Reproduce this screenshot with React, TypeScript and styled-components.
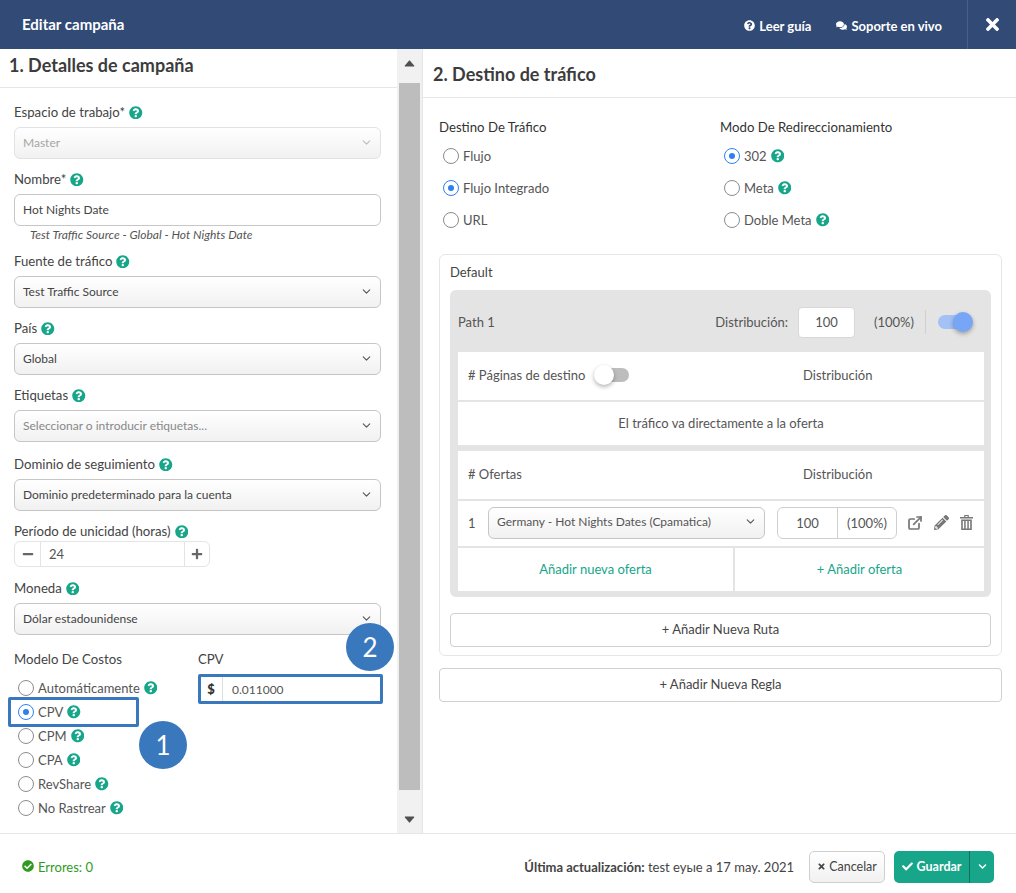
import styled, { createGlobalStyle } from "styled-components";
import {
  FaCheck,
  FaCheckCircle,
  FaChevronDown,
  FaComments,
  FaMinus,
  FaPencilAlt,
  FaPlus,
  FaQuestionCircle,
  FaTimes,
} from "react-icons/fa";
import { FiChevronDown, FiExternalLink } from "react-icons/fi";
import { IoCaretDown, IoCaretUp } from "react-icons/io5";

const GlobalStyle = createGlobalStyle`
  * { box-sizing: border-box; }
  html, body { margin: 0; padding: 0; }
  body {
    font-family: "Lato", "Liberation Sans", sans-serif;
    color: #444;
    background: #fff;
  }
`;

const Page = styled.div`
  width: 1016px;
  height: 893px;
  display: flex;
  flex-direction: column;
  overflow: hidden;
`;

const Header = styled.header`
  height: 49px;
  flex: none;
  background: #324a76;
  color: #fff;
  display: flex;
  align-items: center;
  padding-left: 22px;
`;

const HeaderTitle = styled.div`
  font-size: 15px;
  font-weight: 700;
  flex: 1;
  margin-top: -1px;
`;

const HeaderLink = styled.div`
  display: flex;
  align-items: center;
  gap: 4px;
  font-size: 13px;
  font-weight: 700;
  margin-right: 25px;
  margin-top: 2px;
  svg { font-size: 11px; }
`;

const HeaderClose = styled.div`
  width: 49px;
  height: 49px;
  border-left: 1px solid #47608c;
  display: flex;
  align-items: center;
  justify-content: center;
  font-size: 19px;
`;

const Main = styled.div`
  flex: 1;
  display: flex;
  min-height: 0;
`;

const LeftPanel = styled.section`
  width: 397px;
  position: relative;
`;

const LeftHeading = styled.h2`
  margin: 0;
  height: 39px;
  padding: 6px 0 0 9px;
  border-bottom: 1px solid #e6e6e6;
  font-size: 18px;
  line-height: 21px;
  font-weight: 700;
  color: #3c3c3c;
`;

const RightHeading = styled.h2`
  margin: 0;
  height: 49px;
  padding: 15px 0 0 10px;
  border-bottom: 1px solid #e6e6e6;
  font-size: 18px;
  line-height: 21px;
  font-weight: 700;
  color: #3c3c3c;
`;

const Form = styled.div`
  padding: 17px 16px 0 14px;
`;

const Field = styled.div<{ $gap?: number }>`
  margin-bottom: ${(p) => p.$gap ?? 13}px;
`;

const Label = styled.div<{ $gap?: number }>`
  display: flex;
  align-items: center;
  gap: 4px;
  font-size: 13.2px;
  line-height: 15px;
  color: #444;
  margin-bottom: ${(p) => p.$gap ?? 7}px;
`;

const Help = styled(FaQuestionCircle)`
  color: #17a689;
  font-size: 13.5px;
  flex: none;
`;

const SelectBox = styled.div<{ $disabled?: boolean; $muted?: boolean }>`
  height: 32px;
  border: 1px solid ${(p) => (p.$disabled ? "#e2e2e2" : "#c6c6c6")};
  border-radius: 6px;
  background: linear-gradient(#fff, #f1f1f1);
  display: flex;
  align-items: center;
  justify-content: space-between;
  padding: 0 7px 2px 8px;
  font-size: 12px;
  color: ${(p) => (p.$disabled ? "#a5a5a5" : p.$muted ? "#888" : "#444")};
  svg {
    font-size: 13px;
    color: ${(p) => (p.$disabled ? "#bbb" : "#555")};
  }
`;

const TextInput = styled.div`
  height: 32px;
  border: 1px solid #c6c6c6;
  border-radius: 6px;
  background: #fff;
  display: flex;
  align-items: center;
  padding: 0 8px 2px;
  font-size: 12px;
  color: #444;
`;

const Caption = styled.div`
  height: 14px;
  padding: 2px 0 0 16px;
  margin-bottom: 14px;
  font-size: 12px;
  line-height: 14px;
  font-style: italic;
  color: #555;
`;

const Stepper = styled.div`
  width: 196px;
  height: 26px;
  border: 1px solid #e4e4e4;
  border-radius: 6px;
  display: grid;
  grid-template-columns: 25px 1fr 24px;
  font-size: 13px;
  color: #555;
`;

const StepButton = styled.div`
  display: flex;
  align-items: center;
  justify-content: center;
  font-size: 12px;
  color: #666;
`;

const StepValue = styled.div`
  border-left: 1px solid #e4e4e4;
  border-right: 1px solid #e4e4e4;
  display: flex;
  align-items: center;
  padding-left: 8px;
`;

const CostGrid = styled.div`
  display: grid;
  grid-template-columns: 184px 1fr;
  margin-top: 17px;
`;

const CostLabel = styled.div`
  font-size: 13.2px;
  line-height: 15px;
  color: #444;
  margin-bottom: 9px;
`;

const CostRadios = styled.div`
  display: flex;
  flex-direction: column;
  padding-left: 4px;
`;

const RadioRow = styled.div<{ $height: number }>`
  display: flex;
  align-items: center;
  gap: 4px;
  height: ${(p) => p.$height}px;
  font-size: 13px;
  color: #555;
`;

const RadioDot = styled.span<{ $on?: boolean }>`
  width: 16px;
  height: 16px;
  border-radius: 50%;
  flex: none;
  border: 1.5px solid ${(p) => (p.$on ? "#2f7fef" : "#8c8c8c")};
  background: #fff;
  display: flex;
  align-items: center;
  justify-content: center;
  &::after {
    content: "";
    width: 6px;
    height: 6px;
    border-radius: 50%;
    background: ${(p) => (p.$on ? "#2f7fef" : "transparent")};
  }
`;

const CurrencyInput = styled.div`
  margin: 2px 0 0 2px;
  height: 26px;
  width: 181px;
  display: flex;
  align-items: center;
  font-size: 12px;
  color: #555;
`;

const Addon = styled.div`
  width: 23px;
  height: 100%;
  border-right: 1px solid #dedede;
  display: flex;
  align-items: center;
  justify-content: center;
  font-size: 13px;
  font-weight: 900;
  color: #333;
`;

const AddonValue = styled.div`
  padding-left: 9px;
`;

const Highlight = styled.div<{ $x: number; $y: number; $w: number; $h: number }>`
  position: absolute;
  left: ${(p) => p.$x}px;
  top: ${(p) => p.$y}px;
  width: ${(p) => p.$w}px;
  height: ${(p) => p.$h}px;
  border: 3px solid #3978bc;
  border-radius: 2px;
`;

const Marker = styled.div<{ $x: number; $y: number }>`
  position: absolute;
  left: ${(p) => p.$x}px;
  top: ${(p) => p.$y}px;
  width: 48px;
  height: 48px;
  border-radius: 50%;
  background: #3978bc;
  color: #fff;
  font-size: 26px;
  display: flex;
  align-items: center;
  justify-content: center;
`;

const Scrollbar = styled.div`
  width: 26px;
  flex: none;
  background: #f1f1f1;
  border-right: 1px solid #e6e6e6;
  display: flex;
  flex-direction: column;
  align-items: center;
  color: #505050;
`;

const ScrollArrow = styled.div<{ $height: number; $top: number; $bottom: number }>`
  height: ${(p) => p.$height}px;
  padding: ${(p) => p.$top}px 0 ${(p) => p.$bottom}px;
  flex: none;
  display: flex;
  align-items: center;
  justify-content: center;
  font-size: 15px;
`;

const ScrollThumb = styled.div`
  flex: 1;
  width: 21px;
  margin-right: 1px;
  background: #bdbdbd;
`;

const RightPanel = styled.section`
  flex: 1;
  min-width: 0;
`;

const RightBody = styled.div`
  padding: 22px 14px 0 16px;
`;

const DestGrid = styled.div`
  display: grid;
  grid-template-columns: 281px 1fr;
  margin-bottom: 18px;
`;

const DestLabel = styled.div`
  font-size: 13.2px;
  line-height: 15px;
  color: #333;
  margin-bottom: 5px;
`;

const DestRadios = styled.div`
  display: flex;
  flex-direction: column;
  padding-left: 4px;
`;

const RuleCard = styled.div`
  border: 1px solid #e6e6e6;
  border-radius: 6px;
  padding: 9px 10px 8px;
`;

const RuleTitle = styled.div`
  font-size: 13px;
  line-height: 16px;
  color: #444;
  margin-bottom: 10px;
`;

const PathBox = styled.div`
  background: #e4e4e4;
  border-radius: 6px;
  padding: 0 7px 6px 8px;
  font-size: 13px;
  color: #555;
`;

const PathHeader = styled.div`
  height: 62px;
  display: flex;
  align-items: center;
  padding: 2px 13px 0 0;
`;

const PathName = styled.div`
  flex: 1;
`;

const PathInput = styled.div`
  width: 57px;
  height: 31px;
  margin: 0 19px 0 10px;
  background: #fff;
  border: 1px solid #d8d8d8;
  border-radius: 4px;
  display: flex;
  align-items: center;
  justify-content: center;
`;

const PathDivider = styled.div`
  width: 1px;
  height: 24px;
  background: #cfcfcf;
  margin: 0 12px 0 11px;
`;

const Toggle = styled.div<{ $on?: boolean }>`
  position: relative;
  width: 33px;
  height: 14px;
  border-radius: 7px;
  background: ${(p) => (p.$on ? "#a3c1f5" : "#bdbdbd")};
  &::after {
    content: "";
    position: absolute;
    top: -3px;
    left: ${(p) => (p.$on ? "15px" : "-2px")};
    width: 20px;
    height: 20px;
    border-radius: 50%;
    background: ${(p) => (p.$on ? "#78a6f7" : "#fff")};
    box-shadow: 0 2px 4px rgba(0, 0, 0, 0.3);
  }
`;

const WhiteRow = styled.div<{ $height: number; $gap: number }>`
  height: ${(p) => p.$height}px;
  margin-bottom: ${(p) => p.$gap}px;
  background: #fff;
  display: flex;
  align-items: center;
  padding: 0 10px 2px;
`;

const ColumnTitle = styled.div`
  width: 335px;
  display: flex;
  align-items: center;
  gap: 11px;
`;

const CenteredText = styled.div`
  flex: 1;
  text-align: center;
`;

const OfferIndex = styled.div`
  width: 20px;
`;

const OfferSelect = styled(SelectBox)`
  width: 277px;
  color: #555;
`;

const OfferInput = styled.div`
  width: 120px;
  height: 32px;
  margin-left: 12px;
  border: 1px solid #cfcfcf;
  border-radius: 6px;
  display: grid;
  grid-template-columns: 59px 1fr;
  align-items: center;
  text-align: center;
`;

const OfferPercent = styled.div`
  border-left: 1px solid #cfcfcf;
  line-height: 30px;
`;

const OfferIcons = styled.div`
  display: flex;
  align-items: center;
  gap: 11px;
  margin-left: 10px;
  color: #777;
  font-size: 15px;
  svg:first-child {
    font-size: 16px;
    stroke-width: 2.6;
  }
`;

const AddRow = styled.div`
  display: grid;
  grid-template-columns: 275px 1fr;
  height: 43px;
  gap: 2px;
  background: #e4e4e4;
`;

const AddLink = styled.div`
  background: #fff;
  color: #17a689;
  display: flex;
  align-items: center;
  justify-content: center;
  padding-bottom: 2px;
`;

const WideButton = styled.div<{ $top: number }>`
  margin-top: ${(p) => p.$top}px;
  height: 34px;
  border: 1px solid #d0d0d0;
  border-radius: 4px;
  background: #fff;
  display: flex;
  align-items: center;
  justify-content: center;
  padding-bottom: 2px;
  font-size: 13px;
  color: #444;
`;

const Footer = styled.footer`
  height: 60px;
  flex: none;
  border-top: 1px solid #e6e6e6;
  display: flex;
  align-items: center;
  padding: 6px 22px 0;
  font-size: 13px;
`;

const ErrorsText = styled.div`
  flex: 1;
  display: flex;
  align-items: center;
  gap: 4px;
  color: #2f9a1f;
  font-size: 13px;
  svg { font-size: 12px; margin-top: -2px; }
`;

const Updated = styled.div`
  color: #444;
  margin-right: 15px;
  b { font-weight: 700; }
`;

const CancelButton = styled.div`
  width: 76px;
  height: 32px;
  border: 1px solid #cfcfcf;
  border-radius: 5px;
  background: linear-gradient(#fff, #f1f1f1);
  display: flex;
  align-items: center;
  justify-content: center;
  gap: 3px;
  font-size: 12.5px;
  color: #444;
  margin-right: 9px;
  svg { font-size: 9px; }
`;

const SaveButton = styled.div`
  width: 100px;
  height: 32px;
  border-radius: 5px;
  background: #17a689;
  color: #fff;
  display: grid;
  grid-template-columns: 76px 1fr;
  font-size: 12.5px;
  font-weight: 700;
`;

const SaveMain = styled.div`
  display: flex;
  align-items: center;
  justify-content: center;
  gap: 4px;
  border-right: 1px solid #0f6f5c;
  svg { font-size: 11px; }
`;

const SaveCaret = styled.div`
  display: flex;
  align-items: center;
  justify-content: center;
  font-size: 9px;
`;

const TrashIcon = () => (
  <svg width="13" height="15" viewBox="0 0 13 15" fill="#777">
    <path d="M0 2h13v1.6H0zM4.2 0h4.6v2H7.6V1H5.4v1H4.2z" />
    <path d="M1.2 4.4h10.6V15H1.2zM2.8 6v7.4h1.4V6zm2.9 0v7.4h1.6V6zm3.1 0v7.4h1.4V6z" fillRule="evenodd" />
  </svg>
);

const fields = [
  { label: "Fuente de tráfico", value: "Test Traffic Source" },
  { label: "País", value: "Global" },
  { label: "Etiquetas", value: "Seleccionar o introducir etiquetas...", muted: true },
];

const costModels = ["Automáticamente", "CPV", "CPM", "CPA", "RevShare", "No Rastrear"];
const destinations = ["Flujo", "Flujo Integrado", "URL"];
const redirects = ["302", "Meta", "Doble Meta"];

export default function App() {
  return (
    <Page>
      <GlobalStyle />
      <Header>
        <HeaderTitle>Editar campaña</HeaderTitle>
        <HeaderLink>
          <FaQuestionCircle /> Leer guía
        </HeaderLink>
        <HeaderLink>
          <FaComments /> Soporte en vivo
        </HeaderLink>
        <HeaderClose>
          <FaTimes />
        </HeaderClose>
      </Header>

      <Main>
        <LeftPanel>
          <LeftHeading>1. Detalles de campaña</LeftHeading>
          <Form>
            <Field>
              <Label>
                Espacio de trabajo* <Help />
              </Label>
              <SelectBox $disabled>
                Master <FiChevronDown />
              </SelectBox>
            </Field>
            <Field $gap={0}>
              <Label>
                Nombre* <Help />
              </Label>
              <TextInput>Hot Nights Date</TextInput>
              <Caption>Test Traffic Source - Global - Hot Nights Date</Caption>
            </Field>
            {fields.map((f) => (
              <Field key={f.label} $gap={f.muted ? 15 : 13}>
                <Label>
                  {f.label} <Help />
                </Label>
                <SelectBox $muted={f.muted}>
                  {f.value} <FiChevronDown />
                </SelectBox>
              </Field>
            ))}
            <Field>
              <Label>
                Dominio de seguimiento <Help />
              </Label>
              <SelectBox>
                Dominio predeterminado para la cuenta <FiChevronDown />
              </SelectBox>
            </Field>
            <Field $gap={14}>
              <Label $gap={2}>
                Período de unicidad (horas) <Help />
              </Label>
              <Stepper>
                <StepButton>
                  <FaMinus />
                </StepButton>
                <StepValue>24</StepValue>
                <StepButton>
                  <FaPlus />
                </StepButton>
              </Stepper>
            </Field>
            <Field $gap={0}>
              <Label>
                Moneda <Help />
              </Label>
              <SelectBox>
                Dólar estadounidense <FiChevronDown />
              </SelectBox>
            </Field>
            <CostGrid>
              <div>
                <CostLabel>Modelo De Costos</CostLabel>
                <CostRadios>
                  {costModels.map((m) => (
                    <RadioRow key={m} $height={24}>
                      <RadioDot $on={m === "CPV"} />
                      {m}
                      <Help />
                    </RadioRow>
                  ))}
                </CostRadios>
              </div>
              <div>
                <CostLabel>CPV</CostLabel>
                <CurrencyInput>
                  <Addon>$</Addon>
                  <AddonValue>0.011000</AddonValue>
                </CurrencyInput>
              </div>
            </CostGrid>
          </Form>
          <Highlight $x={8} $y={648} $w={131} $h={30} />
          <Highlight $x={198} $y={625} $w={185} $h={30} />
          <Marker $x={139} $y={672}>1</Marker>
          <Marker $x={346} $y={574}>2</Marker>
        </LeftPanel>

        <Scrollbar>
          <ScrollArrow $height={34} $top={0} $bottom={6}>
            <IoCaretUp />
          </ScrollArrow>
          <ScrollThumb />
          <ScrollArrow $height={43} $top={15} $bottom={0}>
            <IoCaretDown />
          </ScrollArrow>
        </Scrollbar>

        <RightPanel>
          <RightHeading>2. Destino de tráfico</RightHeading>
          <RightBody>
            <DestGrid>
              <div>
                <DestLabel>Destino De Tráfico</DestLabel>
                <DestRadios>
                  {destinations.map((d) => (
                    <RadioRow key={d} $height={32}>
                      <RadioDot $on={d === "Flujo Integrado"} />
                      {d}
                    </RadioRow>
                  ))}
                </DestRadios>
              </div>
              <div>
                <DestLabel>Modo De Redireccionamiento</DestLabel>
                <DestRadios>
                  {redirects.map((r) => (
                    <RadioRow key={r} $height={32}>
                      <RadioDot $on={r === "302"} />
                      {r}
                      <Help />
                    </RadioRow>
                  ))}
                </DestRadios>
              </div>
            </DestGrid>

            <RuleCard>
              <RuleTitle>Default</RuleTitle>
              <PathBox>
                <PathHeader>
                  <PathName>Path 1</PathName>
                  Distribución:
                  <PathInput>100</PathInput>
                  (100%)
                  <PathDivider />
                  <Toggle $on />
                </PathHeader>
                <WhiteRow $height={48} $gap={2}>
                  <ColumnTitle>
                    # Páginas de destino <Toggle />
                  </ColumnTitle>
                  Distribución
                </WhiteRow>
                <WhiteRow $height={43} $gap={6}>
                  <CenteredText>El tráfico va directamente a la oferta</CenteredText>
                </WhiteRow>
                <WhiteRow $height={48} $gap={2}>
                  <ColumnTitle># Ofertas</ColumnTitle>
                  Distribución
                </WhiteRow>
                <WhiteRow $height={45} $gap={2}>
                  <OfferIndex>1</OfferIndex>
                  <OfferSelect>
                    Germany - Hot Nights Dates (Cpamatica) <FiChevronDown />
                  </OfferSelect>
                  <OfferInput>
                    <div>100</div>
                    <OfferPercent>(100%)</OfferPercent>
                  </OfferInput>
                  <OfferIcons>
                    <FiExternalLink />
                    <FaPencilAlt />
                    <TrashIcon />
                  </OfferIcons>
                </WhiteRow>
                <AddRow>
                  <AddLink>Añadir nueva oferta</AddLink>
                  <AddLink>+ Añadir oferta</AddLink>
                </AddRow>
              </PathBox>
              <WideButton $top={16}>+ Añadir Nueva Ruta</WideButton>
            </RuleCard>
            <WideButton $top={12}>+ Añadir Nueva Regla</WideButton>
          </RightBody>
        </RightPanel>
      </Main>

      <Footer>
        <ErrorsText>
          <FaCheckCircle /> Errores: 0
        </ErrorsText>
        <Updated>
          <b>Última actualización:</b> test еуые a 17 may. 2021
        </Updated>
        <CancelButton>
          <FaTimes /> Cancelar
        </CancelButton>
        <SaveButton>
          <SaveMain>
            <FaCheck /> Guardar
          </SaveMain>
          <SaveCaret>
            <FaChevronDown />
          </SaveCaret>
        </SaveButton>
      </Footer>
    </Page>
  );
}
